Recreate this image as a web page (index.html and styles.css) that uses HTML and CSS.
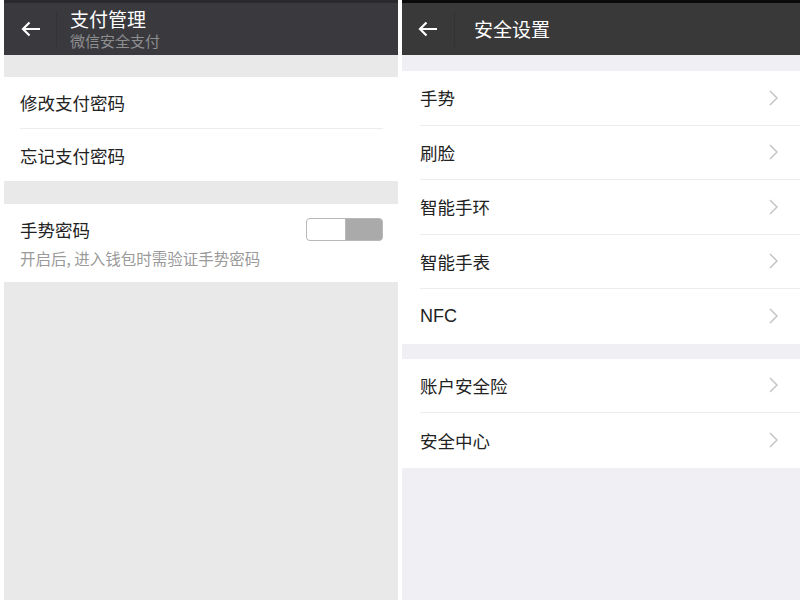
FILE: index.html
```html
<!DOCTYPE html>
<html lang="zh-CN">
<head>
    <meta charset="UTF-8">
    <title>支付管理 / 安全设置</title>
    <link rel="stylesheet" href="styles.css">
</head>
<body>
    <div class="screens">
        <div class="screen screen-pay">
            <div class="statusbar"></div>
            <div class="header">
                <div class="back">
                    <svg width="20" height="16" viewBox="0 0 20 16"><path d="M19 8H2M8.5 1.5L2 8l6.5 6.5" fill="none" stroke="#fff" stroke-width="2.2"/></svg>
                </div>
                <div class="titles">
                    <div class="title">支付管理</div>
                    <div class="subtitle">微信安全支付</div>
                </div>
            </div>
            <div class="gap gap-first"></div>
            <div class="group">
                <div class="row">修改支付密码</div>
                <div class="row">忘记支付密码</div>
            </div>
            <div class="gap gap-mid"></div>
            <div class="group">
                <div class="row row-switch">
                    <div class="row-top">
                        <span>手势密码</span>
                        <div class="switch"><span class="switch-knob"></span></div>
                    </div>
                    <div class="row-note">开启后, 进入钱包时需验证手势密码</div>
                </div>
            </div>
            <div class="rest"></div>
        </div>

        <div class="screen screen-safe">
            <div class="statusbar"></div>
            <div class="header">
                <div class="back">
                    <svg width="20" height="16" viewBox="0 0 20 16"><path d="M19 8H2M8.5 1.5L2 8l6.5 6.5" fill="none" stroke="#fff" stroke-width="2.2"/></svg>
                </div>
                <div class="titles">
                    <div class="title">安全设置</div>
                </div>
            </div>
            <div class="gap gap-first"></div>
            <div class="group">
                <div class="row">手势<svg class="chev" width="9" height="16" viewBox="0 0 9 16"><path d="M1 1l7 7-7 7"/></svg></div>
                <div class="row">刷脸<svg class="chev" width="9" height="16" viewBox="0 0 9 16"><path d="M1 1l7 7-7 7"/></svg></div>
                <div class="row">智能手环<svg class="chev" width="9" height="16" viewBox="0 0 9 16"><path d="M1 1l7 7-7 7"/></svg></div>
                <div class="row">智能手表<svg class="chev" width="9" height="16" viewBox="0 0 9 16"><path d="M1 1l7 7-7 7"/></svg></div>
                <div class="row row-latin">NFC<svg class="chev" width="9" height="16" viewBox="0 0 9 16"><path d="M1 1l7 7-7 7"/></svg></div>
            </div>
            <div class="gap gap-mid"></div>
            <div class="group">
                <div class="row">账户安全险<svg class="chev" width="9" height="16" viewBox="0 0 9 16"><path d="M1 1l7 7-7 7"/></svg></div>
                <div class="row">安全中心<svg class="chev" width="9" height="16" viewBox="0 0 9 16"><path d="M1 1l7 7-7 7"/></svg></div>
            </div>
            <div class="rest"></div>
        </div>
    </div>
</body>
</html>
```

FILE: styles.css
```css
body {
    margin: 0;
    background-color: #fff;
    font-family: "Noto Sans CJK SC", "Noto Sans", sans-serif;
    color: #222;
}

.screens {
    display: flex;
    height: 600px;
    padding-left: 4px;
    gap: 4px;
    overflow: hidden;
}

.screen {
    display: flex;
    flex-direction: column;
}

.screen-pay {
    width: 394px;
    background-color: #e9e9e9;
}

.screen-safe {
    width: 398px;
    background-color: #efeff4;
}

.statusbar {
    height: 3px;
    background-color: #2a2a2d;
}

.screen-safe .statusbar {
    background-color: #0a0a0a;
}

.header {
    height: 52px;
    display: flex;
    align-items: center;
    background-color: #3a3a3e;
    color: #fff;
}

.screen-safe .header {
    background-color: #393939;
}

.back {
    width: 53px;
    height: 36px;
    display: flex;
    align-items: center;
    padding-left: 17px;
    box-sizing: border-box;
    border-right: 1px solid #333336;
}

.screen-safe .back {
    padding-left: 16px;
}

.titles {
    padding-left: 13px;
}

.screen-safe .titles {
    padding-left: 19px;
}

.title {
    font-size: 19px;
    line-height: 24px;
}

.subtitle {
    font-size: 15px;
    line-height: 20px;
    color: #8e8e91;
}

.screen-pay .title {
    margin-top: 0;
}

.gap-first {
    height: 22px;
}

.screen-safe .gap-first {
    height: 16px;
}

.gap-mid {
    height: 23px;
}

.screen-safe .gap-mid {
    height: 15px;
}

.group {
    background-color: #fff;
}

.row {
    height: 52px;
    margin-left: 16px;
    margin-right: 15px;
    display: flex;
    align-items: center;
    justify-content: space-between;
    font-size: 17.5px;
    border-bottom: 1px solid #ececec;
    box-sizing: border-box;
}

.screen-safe .row {
    height: 54.5px;
    margin-left: 18px;
    margin-right: 0;
    padding-right: 22px;
}

.row:last-child {
    border-bottom: none;
}

.row-latin {
    font-family: "Liberation Sans", "Noto Sans CJK SC", sans-serif;
    font-size: 18px;
}

.row-switch {
    height: 78px;
    display: block;
    padding-top: 12px;
}

.row-top {
    display: flex;
    align-items: center;
    justify-content: space-between;
    height: 26px;
}

.row-note {
    margin-top: 5px;
    font-size: 15.5px;
    color: #9a9a9a;
}

.switch {
    width: 77px;
    height: 23px;
    border: 1px solid #b8b8b8;
    border-radius: 4px;
    background-color: #a9aaa9;
    box-sizing: border-box;
    display: flex;
    overflow: hidden;
}

.switch-knob {
    width: 38px;
    height: 100%;
    background-color: #fff;
    border-right: 1px solid #b8b8b8;
}

.chev {
    fill: none;
    stroke: #c4c4c4;
    stroke-width: 1.5;
}

.rest {
    flex: 1;
}
```
